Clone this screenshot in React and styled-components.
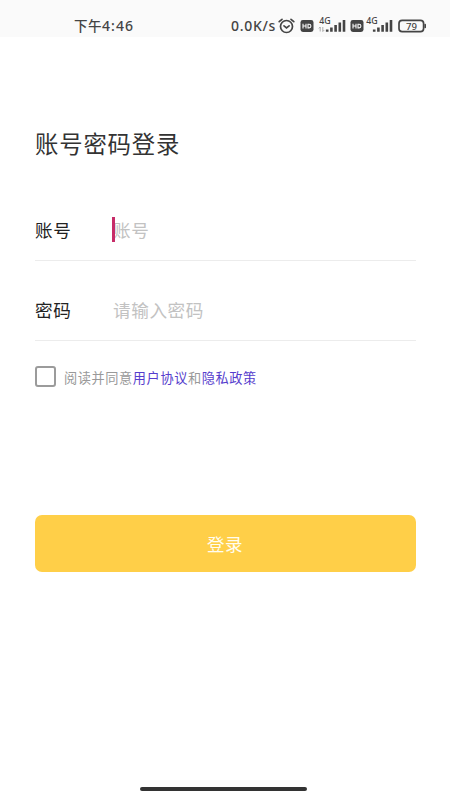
import React from 'react';
import styled, { createGlobalStyle } from 'styled-components';

const App = () => {
    return <Screen>
        <GlobalStyle />
        <StatusBar>
            <Time>下午<span>4:46</span></Time>
            <Speed>0.0K/s</Speed>
            <AlarmIcon />
            <HdIcon right={4} />
            <SignalIcon arrows />
            <HdIcon right={2.5} />
            <SignalIcon />
            <BatteryIcon level="79" />
        </StatusBar>
        <Form>
            <Title>账号密码登录</Title>
            <Field>
                <Label>账号</Label>
                <Placeholder><Caret />账号</Placeholder>
            </Field>
            <Field>
                <Label>密码</Label>
                <Placeholder>请输入密码</Placeholder>
            </Field>
            <Terms>
                <Checkbox />
                <p>阅读并同意<a>用户协议</a>和<a>隐私政策</a></p>
            </Terms>
            <Button type="button">登录</Button>
        </Form>
        <HomeBar />
    </Screen>;
};

const AlarmIcon = () => (
    <Icon width="17" height="16" viewBox="0 0 17 16" $right={4.5}>
        <g fill="none" stroke="#444" strokeWidth="1.7" strokeLinecap="round">
            <circle cx="8.5" cy="8.5" r="6" />
            <path d="M1.2 3.7 4 1.3M15.8 3.7 13 1.3M6 7.8l2.5 2 2.6-2" />
        </g>
    </Icon>
);

const HdIcon = ({ right }) => (
    <Icon width="14" height="16" viewBox="0 0 14 16" $right={right}>
        <rect x="0.5" y="2" width="13" height="12" rx="2.4" fill="#444" />
        <path d="M3 5.8v4.6M6 5.8v4.6M3 8h3M8 6.3v3.6h1.1q1.8 0 1.8-1.8t-1.8-1.8z" fill="none" stroke="#fafafa" strokeWidth="1.1" />
    </Icon>
);

// network type over the signal bars, arrows show the data traffic
const SignalIcon = ({ arrows }) => (
    <Icon width={arrows ? 28 : 27} height="24" viewBox={arrows ? '0 -3 28 24' : '1 -3 27 24'} $right={arrows ? 4 : 5}>
        <text x="1.3" y="7.2" fontSize="8.8" fontWeight="500" fill="#444">4G</text>
        {arrows && <path d="M2.2 14.5V10M.8 11.4l1.4-1.4M4.8 10v4.5M6.2 13.1l-1.4 1.4" fill="none" stroke="#999" strokeWidth="0.8" />}
        <path d="M9.2 12.5v2.2M13.4 10.5v4.2M17.6 8v6.7M21.8 5.5v9.2M26 3v11.7" fill="none" stroke="#444" strokeWidth="2.6" strokeLinecap="butt" />
    </Icon>
);

const BatteryIcon = ({ level }) => (
    <Icon width="30" height="16" viewBox="0 0 30 16" $right={0}>
        <rect x="1" y="2.4" width="24.6" height="11.2" rx="3.2" fill="none" stroke="#444" strokeWidth="1.7" />
        <path d="M27.2 6.6v2.8" stroke="#444" strokeWidth="1.6" strokeLinecap="round" />
        <text x="13.4" y="11.5" fontSize="9.6" fontWeight="500" textAnchor="middle" fill="#444">{level}</text>
    </Icon>
);

const GlobalStyle = createGlobalStyle`
* {
    box-sizing: border-box;
}
body {
    margin: 0;
    background: #fff;
    font-family: "Noto Sans", "Noto Sans CJK SC", sans-serif;
}
h1, p {
    margin: 0;
}
`;

const Screen = styled.main`
    width: 450px;
    height: 800px;
    display: flex;
    flex-direction: column;
    overflow: hidden;
    background: #fff;
`;

const StatusBar = styled.header`
    height: 37px;
    flex: none;
    display: flex;
    align-items: center;
    padding: 15px 20px 0 74px;
    background: #fafafa;
    color: #444;
    line-height: 22px;
`;

const Time = styled.span`
    flex: none;
    width: 157px;
    font-size: 13.5px;
    font-weight: 500;
    font-family: "Noto Sans CJK SC", sans-serif;
    line-height: 20px;
    padding-bottom: 1px;
    letter-spacing: 0.5px;
    span {
        font-family: "Noto Sans", sans-serif;
        font-size: 14px;
        letter-spacing: 1.1px;
    }
`;

const Speed = styled.span`
    flex: none;
    width: 47px;
    font-size: 14px;
    font-weight: 500;
    letter-spacing: 0.7px;
    white-space: nowrap;
`;

const Icon = styled.svg`
    flex: none;
    margin-right: ${({ $right }) => $right}px;
`;

const Form = styled.section`
    flex: 1;
    padding: 88px 34px 0 35px;
    font-family: "Noto Sans CJK SC", sans-serif;
`;

const Title = styled.h1`
    height: 36px;
    margin-bottom: 40px;
    color: #333;
    font-size: 23.4px;
    font-weight: 400;
    letter-spacing: 0.8px;
    line-height: 36px;
`;

const Field = styled.div`
    height: 60px;
    margin-bottom: 20px;
    display: flex;
    border-bottom: 1px solid #ececec;
    font-size: 17.6px;
    letter-spacing: 0.6px;
    line-height: 57px;
`;

const Label = styled.span`
    width: 78px;
    color: #222;
`;

const Placeholder = styled.span`
    position: relative;
    color: #c2c2c2;
`;

const Caret = styled.i`
    position: absolute;
    left: -1px;
    top: 16px;
    width: 2.5px;
    height: 25px;
    background: #c72c68;
`;

const Terms = styled.div`
    height: 30px;
    display: flex;
    align-items: center;
    gap: 8px;
    color: #999;
    font-size: 13.2px;
    letter-spacing: 0.58px;
    line-height: 28px;
    p {
        padding-top: 3px;
    }
    a {
        color: #563dcd;
    }
`;

const Checkbox = styled.span`
    width: 21px;
    height: 21px;
    border: 2px solid #9b9b9b;
    border-radius: 3px;
`;

const Button = styled.button`
    width: 381px;
    height: 57px;
    margin: 124px 0 0 -0.5px;
    padding: 0;
    border: none;
    border-radius: 7px;
    background: #ffcf48;
    color: #fffdf0;
    font-family: inherit;
    font-size: 17.5px;
    letter-spacing: 0.6px;
    line-height: 57px;
`;

const HomeBar = styled.div`
    width: 167px;
    height: 4px;
    margin: 0 0 9px 140px;
    flex: none;
    border-radius: 2px;
    background: #333;
`;

export default App;
